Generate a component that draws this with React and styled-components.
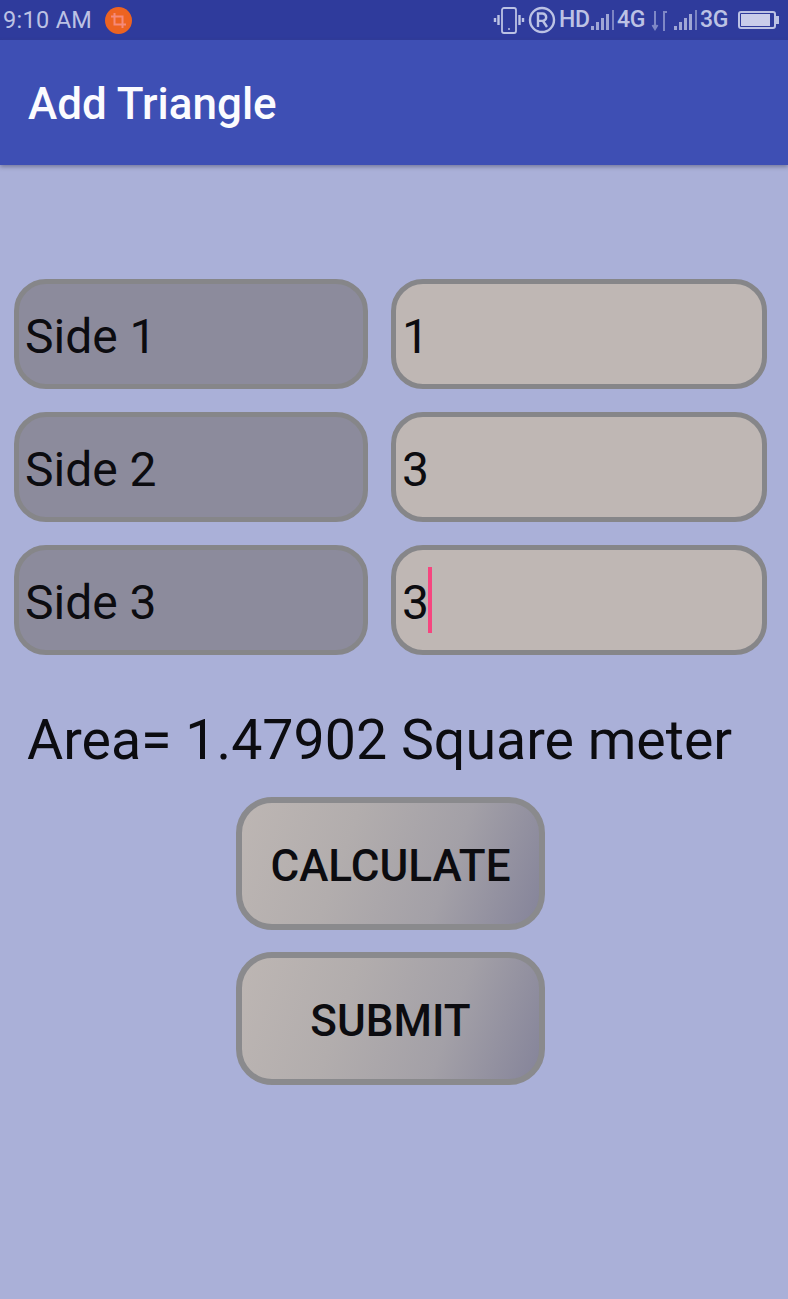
import React from "react";
import styled, { createGlobalStyle } from "styled-components";

const GlobalStyle = createGlobalStyle`
  html, body {
    margin: 0;
    padding: 0;
    background: #aab0d8;
  }
  body {
    font-family: Roboto, "Liberation Sans", sans-serif;
  }
`;

const Page = styled.div`
  width: 788px;
  height: 1299px;
  overflow: hidden;
  background: #aab0d8;
  color: #0c0c10;
`;

const StatusBar = styled.div`
  height: 40px;
  background: #2f3b9c;
  display: flex;
  align-items: center;
  padding: 0 8px 0 3px;
  color: #bcc2e4;
`;

const Clock = styled.span`
  font-size: 23.5px;
  line-height: 40px;
  letter-spacing: 0.3px;
`;

const RecordDot = styled.span`
  width: 27px;
  height: 27px;
  margin-left: 13px;
  border-radius: 50%;
  background: #ed6321;
  display: flex;
  align-items: center;
  justify-content: center;
`;

const StatusRight = styled.div`
  margin-left: auto;
  display: flex;
  align-items: center;
  gap: 3px;
`;

const NetLabel = styled.span`
  width: 29px;
  font-size: 23px;
  font-weight: 500;
  line-height: 40px;
  letter-spacing: -0.4px;
  white-space: nowrap;
`;

const AppBar = styled.header`
  box-sizing: border-box;
  height: 125px;
  background: #3e4fb4;
  box-shadow: 0 2px 4px rgba(60, 60, 90, 0.45);
  display: flex;
  align-items: center;
  padding: 3px 28px 0;
  position: relative;
`;

const Title = styled.h1`
  margin: 0;
  color: #fbfbfe;
  font-size: 44px;
  font-weight: 500;
`;

const Content = styled.main`
  padding: 114px 21px 0 14px;
`;

const Fields = styled.div`
  display: grid;
  grid-template-columns: 354px 376px;
  grid-auto-rows: 110px;
  gap: 23px;
`;

const Cell = styled.div`
  box-sizing: border-box;
  border: 5px solid #868689;
  border-radius: 32px;
  display: flex;
  align-items: center;
  font-size: 48px;
  background: ${(p) => (p.$input ? "#bfb7b4" : "#8c8b9c")};
  padding: 5px 0 0 ${(p) => (p.$input ? "6px" : "6px")};
`;

const Caret = styled.span`
  width: 4px;
  height: 66px;
  margin: -5px 0 0 -1px;
  background: #f6457f;
`;

const AreaText = styled.p`
  margin: 0;
  padding: 53px 0 0 13px;
  font-size: 55.5px;
  line-height: 66px;
  white-space: nowrap;
`;

const Actions = styled.div`
  margin-top: 23px;
  padding-left: 222px;
  display: flex;
  flex-direction: column;
  gap: 22px;
`;

const ActionButton = styled.button`
  box-sizing: border-box;
  width: 309px;
  height: 133px;
  border: 6px solid #8a8a8d;
  border-radius: 36px;
  background: linear-gradient(110deg, #bdb6b3 0%, #b2adad 35%, #a3a0a7 68%, #85849a 100%);
  color: #0c0c10;
  font-family: inherit;
  font-size: 44px;
  font-weight: 500;
  padding: 5px 0 0;
`;

function CropIcon() {
  return (
    <svg width="15" height="15" viewBox="0 0 15 15" fill="none" stroke="#f58a7a" strokeWidth="2">
      <path d="M3.5 0v11.5H15M0 3.5h11.5V15" />
    </svg>
  );
}

function VibrateIcon() {
  return (
    <svg width="32" height="34" viewBox="0 0 32 34" fill="none" stroke="#bcc2e4">
      <rect x="9" y="5" width="14" height="25" rx="2" strokeWidth="1.8" />
      <path d="M15 26h2" strokeWidth="1.6" />
      <path d="M5.5 12v10M2 15v4M26.5 12v10M30 15v4" strokeWidth="2.4" />
    </svg>
  );
}

function RegisteredIcon() {
  return (
    <svg width="28" height="28" viewBox="0 0 28 28" fill="none" stroke="#bcc2e4" strokeWidth="2.4">
      <circle cx="14" cy="14" r="12" />
      <path d="M10 21V7.5h4.500a3.700 3.700 0 0 1 0 7.400H10M15 15l4 6" />
    </svg>
  );
}

function SignalIcon() {
  return (
    <svg width="23" height="28" viewBox="0 0 23 28" fill="#bcc2e4">
      <rect x="0" y="20" width="3" height="4" opacity="0.8" />
      <rect x="5" y="16" width="3" height="8" opacity="0.8" />
      <rect x="10" y="12" width="3" height="12" opacity="0.8" />
      <rect x="15" y="8" width="3" height="16" opacity="0.8" />
      <rect x="21" y="4" width="2" height="20" opacity="0.55" />
    </svg>
  );
}

function DataArrowsIcon() {
  return (
    <svg width="22" height="28" viewBox="0 0 22 28" fill="none" stroke="#7f88c6" strokeWidth="2">
      <path d="M6 5v17M3.500 19l2.500 4 2.500-4" />
      <path d="M15 25V6h3" />
    </svg>
  );
}

function BatteryIcon() {
  return (
    <svg width="48" height="22" viewBox="0 0 48 22">
      <rect x="7" y="3" width="36" height="16" rx="2" fill="none" stroke="#bcc2e4" strokeWidth="2" />
      <rect x="9" y="5" width="29" height="12" fill="#c9cdea" />
      <rect x="44" y="7" width="3" height="8" fill="#bcc2e4" />
    </svg>
  );
}

const sides = [
  { label: "Side 1", value: "1" },
  { label: "Side 2", value: "3" },
  { label: "Side 3", value: "3", focused: true },
];

function App() {
  return (
    <Page>
      <GlobalStyle />
      <StatusBar>
        <Clock>9:10 AM</Clock>
        <RecordDot>
          <CropIcon />
        </RecordDot>
        <StatusRight>
          <VibrateIcon />
          <RegisteredIcon />
          <NetLabel>HD</NetLabel>
          <SignalIcon />
          <NetLabel>4G</NetLabel>
          <DataArrowsIcon />
          <SignalIcon />
          <NetLabel>3G</NetLabel>
          <BatteryIcon />
        </StatusRight>
      </StatusBar>
      <AppBar>
        <Title>Add Triangle</Title>
      </AppBar>
      <Content>
        <Fields>
          {sides.map((side) => (
            <React.Fragment key={side.label}>
              <Cell>{side.label}</Cell>
              <Cell $input>
                {side.value}
                {side.focused && <Caret />}
              </Cell>
            </React.Fragment>
          ))}
        </Fields>
        <AreaText>Area= 1.47902 Square meter</AreaText>
        <Actions>
          <ActionButton>CALCULATE</ActionButton>
          <ActionButton>SUBMIT</ActionButton>
        </Actions>
      </Content>
    </Page>
  );
}

export default App;
